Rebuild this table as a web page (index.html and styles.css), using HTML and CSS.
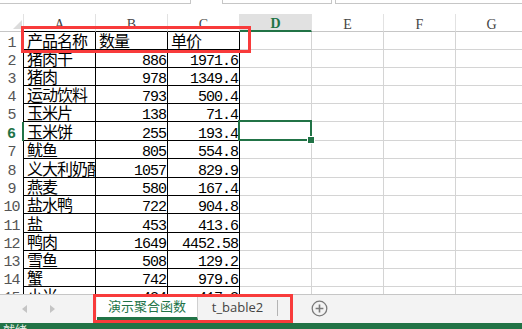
FILE: index.html
```html
<!DOCTYPE html>
<html>
<head>
<meta charset="utf-8">
<link rel="stylesheet" href="styles.css">
</head>
<body>
<div class="app">
  <div class="topbar">
    <div class="tb-name"></div>
    <div class="tb-gap"></div>
    <div class="tb-fx"></div>
    <div class="tb-gap2"></div>
    <div class="tb-formula"></div>
  </div>
  <div class="sheet">
    <div class="grid">
      <div class="corner"><span class="tri"></span></div>
      <div class="ch ab">A</div><div class="ch ab">B</div><div class="ch ab">C</div><div class="ch sel">D</div><div class="ch">E</div><div class="ch">F</div><div class="ch">G</div>

      <div class="rh">1</div><div class="c d t">产品名称</div><div class="c d t">数量</div><div class="c d t">单价</div><div class="c"></div><div class="c"></div><div class="c"></div><div class="c"></div>
      <div class="rh">2</div><div class="c d t">猪肉干</div><div class="c d n">886</div><div class="c d n">1971.6</div><div class="c"></div><div class="c"></div><div class="c"></div><div class="c"></div>
      <div class="rh">3</div><div class="c d t">猪肉</div><div class="c d n">978</div><div class="c d n">1349.4</div><div class="c"></div><div class="c"></div><div class="c"></div><div class="c"></div>
      <div class="rh">4</div><div class="c d t">运动饮料</div><div class="c d n">793</div><div class="c d n">500.4</div><div class="c"></div><div class="c"></div><div class="c"></div><div class="c"></div>
      <div class="rh">5</div><div class="c d t">玉米片</div><div class="c d n">138</div><div class="c d n">71.4</div><div class="c"></div><div class="c"></div><div class="c"></div><div class="c"></div>
      <div class="rh rsel">6</div><div class="c d t">玉米饼</div><div class="c d n">255</div><div class="c d n">193.4</div><div class="c"></div><div class="c"></div><div class="c"></div><div class="c"></div>
      <div class="rh">7</div><div class="c d t">鱿鱼</div><div class="c d n">805</div><div class="c d n">554.8</div><div class="c"></div><div class="c"></div><div class="c"></div><div class="c"></div>
      <div class="rh">8</div><div class="c d t">义大利奶酪</div><div class="c d n">1057</div><div class="c d n">829.9</div><div class="c"></div><div class="c"></div><div class="c"></div><div class="c"></div>
      <div class="rh">9</div><div class="c d t">燕麦</div><div class="c d n">580</div><div class="c d n">167.4</div><div class="c"></div><div class="c"></div><div class="c"></div><div class="c"></div>
      <div class="rh">10</div><div class="c d t">盐水鸭</div><div class="c d n">722</div><div class="c d n">904.8</div><div class="c"></div><div class="c"></div><div class="c"></div><div class="c"></div>
      <div class="rh">11</div><div class="c d t">盐</div><div class="c d n">453</div><div class="c d n">413.6</div><div class="c"></div><div class="c"></div><div class="c"></div><div class="c"></div>
      <div class="rh">12</div><div class="c d t">鸭肉</div><div class="c d n">1649</div><div class="c d n">4452.58</div><div class="c"></div><div class="c"></div><div class="c"></div><div class="c"></div>
      <div class="rh">13</div><div class="c d t">雪鱼</div><div class="c d n">508</div><div class="c d n">129.2</div><div class="c"></div><div class="c"></div><div class="c"></div><div class="c"></div>
      <div class="rh">14</div><div class="c d t">蟹</div><div class="c d n">742</div><div class="c d n">979.6</div><div class="c"></div><div class="c"></div><div class="c"></div><div class="c"></div>
      <div class="rh">15</div><div class="c d t">小米</div><div class="c d n">434</div><div class="c d n">417.3</div><div class="c"></div><div class="c"></div><div class="c"></div><div class="c"></div>
    </div>
    <div class="selection"><span class="handle"></span></div>
  </div>
  <div class="tabbar">
    <div class="nav">
      <span class="arrow-left"></span>
      <span class="arrow-right"></span>
    </div>
    <div class="tab tab-active">演示聚合函数</div>
    <div class="tab tab-plain">t_bable2</div>
    <div class="tab-sep"></div>
    <div class="add">
      <svg width="17" height="17" viewBox="0 0 17 17">
        <circle cx="8.5" cy="8.5" r="7.3" fill="none" stroke="#7a7a7a" stroke-width="1.3"/>
        <path d="M8.5 4.6v7.8M4.6 8.5h7.8" stroke="#7a7a7a" stroke-width="1.6"/>
      </svg>
    </div>
  </div>
  <div class="status">就绪</div>
</div>
<div class="mark mark-head"></div>
<div class="mark mark-tabs"></div>
</body>
</html>
```

FILE: styles.css
```css
* {
  box-sizing: border-box;
  margin: 0;
  padding: 0;
}

html, body {
  width: 522px;
  height: 329px;
  overflow: hidden;
  background: #fff;
}

body {
  position: relative;
  font-family: "Noto Sans CJK SC", sans-serif;
}

.app {
  display: flex;
  flex-direction: column;
  height: 329px;
}

/* top formula strip (cut off) */
.topbar {
  height: 14px;
  display: flex;
  align-items: flex-start;
}
.tb-name {
  width: 191px;
  height: 4px;
  border-right: 1px solid #c6c6c6;
  border-bottom: 1px solid #c6c6c6;
}
.tb-gap { width: 31px; }
.tb-fx {
  width: 110px;
  height: 4px;
  border: 1px solid #c6c6c6;
  border-top: 0;
}
.tb-gap2 { width: 3px; }
.tb-formula {
  flex: 1;
  height: 4px;
  border-left: 1px solid #c6c6c6;
  border-bottom: 1px solid #c6c6c6;
}

/* sheet */
.sheet {
  position: relative;
  height: 280px;
  overflow: hidden;
}
.grid {
  display: grid;
  width: 528px;
  grid-template-columns: 24px repeat(7, 72px);
  grid-template-rows: 18px 18px 18px 18px 18px 18px 19px 18px 19px 18px 18px 19px 18px 18px 18px 18px;
}

.corner {
  border-right: 1px solid #e2e2e2;
  border-bottom: 1px solid #c6c6c6;
  display: flex;
  justify-content: flex-end;
  align-items: flex-end;
  padding: 0 1px 2px 0;
}
.tri {
  width: 0;
  height: 0;
  border-left: 9px solid transparent;
  border-bottom: 9px solid #dcdcdc;
}

.ch {
  border-right: 1px solid #e2e2e2;
  border-bottom: 1px solid #c6c6c6;
  display: flex;
  justify-content: center;
  align-items: flex-end;
  font-family: "Liberation Serif", serif;
  font-size: 14px;
  line-height: 13px;
  color: #444;
}
.ch.ab {
  border-bottom-color: #000;
}
.ch.sel {
  background: #e1e1e1;
  border-bottom: 2px solid #217346;
  color: #217346;
  font-weight: bold;
}

.rh {
  border-right: 1px solid #000;
  display: flex;
  justify-content: center;
  align-items: flex-end;
  padding-bottom: 1px;
  font-family: "Liberation Mono", monospace;
  font-size: 15px;
  letter-spacing: -1px;
  line-height: 10px;
  color: #555;
  padding-right: 0;
}
.rh.rsel {
  color: #217346;
  font-weight: bold;
  border-right: 2px solid #217346;
}

.c {
  border-right: 1px solid #d4d4d4;
  border-bottom: 1px solid #d4d4d4;
  display: flex;
  align-items: flex-end;
  overflow: hidden;
  white-space: nowrap;
  color: #000;
}
.c.d {
  border-right-color: #000;
  border-bottom-color: #000;
}
.t {
  font-family: "Noto Sans CJK SC", sans-serif;
  font-size: 16px;
  letter-spacing: -1px;
  line-height: 18px;
  padding-left: 3px;
}
.n {
  justify-content: flex-end;
  font-family: "Liberation Mono", monospace;
  font-size: 15px;
  letter-spacing: -1px;
  line-height: 10px;
  padding-right: 1px;
}

/* active cell D6 */
.selection {
  position: absolute;
  left: 238px;
  top: 106px;
  width: 74px;
  height: 21px;
  border: 2px solid #217346;
}
.handle {
  position: absolute;
  right: -4px;
  bottom: -4px;
  width: 6px;
  height: 6px;
  background: #217346;
  box-shadow: 0 0 0 1px #fff;
}

/* sheet tabs */
.tabbar {
  height: 29px;
  border-top: 1px solid #c6c6c6;
  background: #f3f3f3;
  display: flex;
  align-items: flex-start;
}
.nav {
  width: 97px;
  height: 27px;
  display: flex;
  align-items: center;
  gap: 23px;
  padding-left: 22px;
  padding-top: 0;
}
.arrow-left {
  width: 0;
  height: 0;
  border-top: 4px solid transparent;
  border-bottom: 4px solid transparent;
  border-right: 5px solid #c4c4c4;
}
.arrow-right {
  width: 0;
  height: 0;
  border-top: 4px solid transparent;
  border-bottom: 4px solid transparent;
  border-left: 5px solid #c4c4c4;
}
.tab {
  display: flex;
  align-items: center;
  justify-content: center;
  white-space: nowrap;
}
.tab-active {
  width: 101px;
  height: 25px;
  background: #fff;
  border-right: 1px solid #d0d0d0;
  border-bottom: 3px solid #217346;
  color: #217346;
  font-size: 13px;
  line-height: 16px;
}
.tab-plain {
  width: 79px;
  height: 23px;
  color: #444;
  font-family: "Open Sans", sans-serif;
  font-size: 13px;
  line-height: 16px;
}
.tab-sep {
  width: 1px;
  height: 16px;
  margin-top: 5px;
  background: #b4b4b4;
}
.add {
  margin-left: 33px;
  margin-top: 5px;
  display: flex;
}

/* status bar */
.status {
  height: 6px;
  background: #217346;
  color: #e8f0ea;
  font-size: 12px;
  line-height: 12px;
  padding: 1px 0 0 3px;
  overflow: hidden;
}

/* red annotation boxes */
.mark {
  position: absolute;
  border: 3px solid #f83b3b;
}
.mark-head {
  left: 21px;
  top: 26px;
  width: 230px;
  height: 27px;
}
.mark-tabs {
  left: 93px;
  top: 294px;
  width: 200px;
  height: 29px;
}
```
